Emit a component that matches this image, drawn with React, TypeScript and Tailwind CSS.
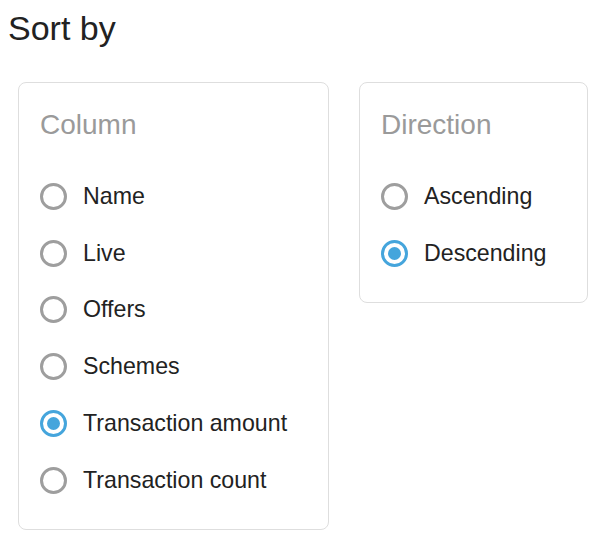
import React, { useState } from 'react';

const columns = ['Name', 'Live', 'Offers', 'Schemes', 'Transaction amount', 'Transaction count'];
const directions = ['Ascending', 'Descending'];

const Radio: React.FC<{ label: string; checked: boolean; onSelect: () => void }> = ({ label, checked, onSelect }) => (
  <label className="flex items-center h-[56.8px] cursor-pointer" onClick={onSelect}>
    <span
      className={`w-[27px] h-[27px] rounded-full border-[3px] flex items-center justify-center shrink-0 ${
        checked ? 'border-[#45a5dc]' : 'border-[#9e9e9e]'
      }`}
    >
      {checked && <span className="w-[13px] h-[13px] rounded-full bg-[#45a5dc]" />}
    </span>
    <span className="ml-[16px] text-[23.2px] text-[#222] leading-none">{label}</span>
  </label>
);

const Group: React.FC<{
  title: string;
  options: string[];
  value: string;
  onChange: (v: string) => void;
  width: string;
}> = ({ title, options, value, onChange, width }) => (
  <fieldset className={`${width} border border-[#dedede] rounded-[8px] pt-[26px] pb-[20px] px-[21px] m-0`}>
    <div className="text-[28px] leading-[32px] h-[32px] text-[#9a9a9a] mb-[27px]">{title}</div>
    {options.map((o) => (
      <Radio key={o} label={o} checked={value === o} onSelect={() => onChange(o)} />
    ))}
  </fieldset>
);

export default function App() {
  const [column, setColumn] = useState('Transaction amount');
  const [direction, setDirection] = useState('Descending');

  return (
    <div className="bg-white w-[610px] h-[550px] font-['Liberation_Sans',Arial,sans-serif]">
      <h1 className="pt-[8px] pl-[8px] text-[34px] leading-[40px] h-[48px] text-[#222] font-normal">Sort by</h1>
      <div className="flex items-start gap-[30px] pl-[18px] mt-[34px]">
        <Group title="Column" options={columns} value={column} onChange={setColumn} width="w-[311px]" />
        <Group title="Direction" options={directions} value={direction} onChange={setDirection} width="w-[229px]" />
      </div>
    </div>
  );
}
